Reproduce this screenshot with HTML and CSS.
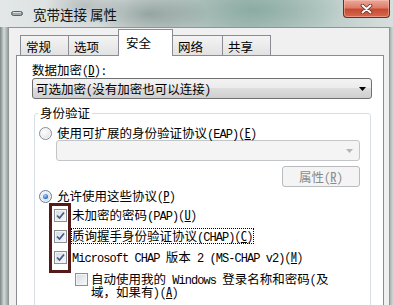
FILE: index.html
```html
<!DOCTYPE html>
<html lang="zh-CN">
<head>
<meta charset="utf-8">
<title>宽带连接 属性</title>
<link rel="stylesheet" href="styles.css">
</head>
<body>
<div class="window">
  <div class="titlebar">
    <svg class="app-icon" width="12" height="7" viewBox="0 0 12 7">
      <rect x="0.5" y="1.5" width="11" height="4" rx="2" fill="#8b9699" stroke="#56626a"/>
      <line x1="2" y1="2.5" x2="10" y2="2.5" stroke="#d9e1e4" stroke-width="1"/>
      <circle cx="3" cy="4" r="0.6" fill="#e8eef0"/>
      <circle cx="5" cy="4" r="0.6" fill="#e8eef0"/>
      <circle cx="7" cy="4" r="0.6" fill="#e8eef0"/>
      <circle cx="9" cy="4" r="0.6" fill="#e8eef0"/>
    </svg>
    <span class="title">宽带连接 属性</span>
    <div class="close-btn">
      <svg width="13" height="10" viewBox="0 0 13 10">
        <path d="M2.5 1.5 L10.5 8.5 M10.5 1.5 L2.5 8.5" stroke="#6a2a20" stroke-width="3.6" stroke-linecap="round"/>
        <path d="M2.5 1.5 L10.5 8.5 M10.5 1.5 L2.5 8.5" stroke="#ffffff" stroke-width="2" stroke-linecap="round"/>
      </svg>
    </div>
  </div>
  <div class="frame">
    <div class="client">
      <div class="tabs">
        <div class="tab t1">常规</div>
        <div class="tab t2">选项</div>
        <div class="tab t3 active">安全</div>
        <div class="tab t4">网络</div>
        <div class="tab t5">共享</div>
      </div>
      <div class="panel">
        <div class="field-label">数据加密(<u>D</u>):</div>
        <div class="combo">
          <span class="combo-text">可选加密(没有加密也可以连接)</span>
          <svg class="combo-arrow" width="7" height="4" viewBox="0 0 7 4"><path d="M0 0 H7 L3.5 4 Z" fill="#000"/></svg>
        </div>
        <fieldset class="group">
          <legend>身份验证</legend>
          <div class="opt radio-row r1">
            <span class="radio"></span>
            <span class="opt-text">使用可扩展的身份验证协议<span class="latin">(EAP)</span>(<u>E</u>)</span>
          </div>
          <div class="eap-block">
            <div class="combo disabled">
              <svg class="combo-arrow" width="7" height="4" viewBox="0 0 7 4"><path d="M0 0 H7 L3.5 4 Z" fill="#b4b4b4"/></svg>
            </div>
            <div class="btn-row"><button class="btn" disabled>属性(<u>R</u>)</button></div>
          </div>
          <div class="opt radio-row r2">
            <span class="radio checked"></span>
            <span class="opt-text">允许使用这些协议(<u>P</u>)</span>
          </div>
          <div class="protocols">
            <div class="opt check-row">
              <span class="checkbox"><svg width="9" height="9" viewBox="0 0 9 9"><path d="M1 4.5 L3.5 7 L8 1.5" fill="none" stroke="#3f5687" stroke-width="1.7"/></svg></span>
              <span class="opt-text">未加密的密码<span class="latin">(PAP)</span>(<u>U</u>)</span>
            </div>
            <div class="opt check-row">
              <span class="checkbox"><svg width="9" height="9" viewBox="0 0 9 9"><path d="M1 4.5 L3.5 7 L8 1.5" fill="none" stroke="#3f5687" stroke-width="1.7"/></svg></span>
              <span class="opt-text focused">质询握手身份验证协议<span class="latin">(CHAP)</span>(<u>C</u>)</span>
            </div>
            <div class="opt check-row">
              <span class="checkbox"><svg width="9" height="9" viewBox="0 0 9 9"><path d="M1 4.5 L3.5 7 L8 1.5" fill="none" stroke="#3f5687" stroke-width="1.7"/></svg></span>
              <span class="opt-text"><span class="latin">Microsoft CHAP </span>版本<span class="latin"> 2 (MS-CHAP v2)</span>(<u>M</u>)</span>
            </div>
            <div class="highlight"></div>
          </div>
          <div class="opt check-row sub">
            <span class="checkbox"></span>
            <span class="opt-text wrap">自动使用我的<span class="latin"> Windows </span>登录名称和密码(及域，如果有)(<u>A</u>)</span>
          </div>
        </fieldset>
      </div>
    </div>
  </div>
</div>
</body>
</html>
```

FILE: styles.css
```css
* { box-sizing: border-box; }
html, body { margin: 0; padding: 0; }
body {
  width: 393px;
  height: 305px;
  overflow: hidden;
  font-family: "Noto Sans Mono CJK SC", "Noto Sans CJK SC", sans-serif;
  font-size: 12.5px;
  color: #000;
}
u { text-decoration: underline; text-underline-offset: 1px; }
.latin {
  font-family: "Liberation Mono", "DejaVu Sans Mono", monospace;
  font-size: 12px;
  letter-spacing: -0.95px;
  line-height: 8px;
}

.window {
  height: 305px;
  display: flex;
  flex-direction: column;
  background: #c3ccca;
}

.titlebar {
  height: 27px;
  flex: none;
  display: flex;
  align-items: center;
  padding-left: 11px;
  background:
    radial-gradient(ellipse 60px 22px at 150px 14px, rgba(105,125,120,0.5), transparent),
    radial-gradient(ellipse 90px 26px at 255px 10px, rgba(110,155,142,0.5), transparent),
    radial-gradient(ellipse 40px 20px at 85px 6px, rgba(120,130,130,0.35), transparent),
    linear-gradient(to right, #e3e7e7 0, #d9dfde 90px, #bcc8c5 170px, #a9bdb7 250px, #b9cbc6 320px, #d7dfdd 393px);
}
.app-icon { flex: none; }
.title {
  margin-left: 10px;
  font-family: "Noto Sans CJK SC", sans-serif;
  font-size: 13.5px;
  line-height: 16px;
  color: #111;
}
.close-btn {
  margin-left: auto;
  margin-right: 3px;
  align-self: flex-start;
  width: 47px;
  height: 18px;
  border: 1px solid #6b2e22;
  border-top: 0;
  border-radius: 0 0 4px 4px;
  background: linear-gradient(#eba99a, #dd7d6b 45%, #c84a30 55%, #d56a50);
  box-shadow: inset 0 0 0 1px rgba(255, 205, 195, 0.45);
  display: flex;
  align-items: center;
  justify-content: center;
}

.frame {
  flex: 1;
  display: flex;
  padding: 0 3px 0 8px;
  min-height: 0;
  background:
    linear-gradient(to right, #7c8685 0, #a7afae 2px, #d4dad9 4px, #b6bebd 6px, #97a09f 8px) left top / 8px 100% no-repeat,
    linear-gradient(to right, #a9b2b1, #d2d8d7) right top / 3px 100% no-repeat,
    #c5cdcc;
}
.client {
  flex: 1;
  min-width: 0;
  display: flex;
  flex-direction: column;
  background: #f0f0f0;
  border: 1px solid #8c9696;
  border-bottom: 0;
  padding: 1px 5px 0 7px;
}

.tabs {
  flex: none;
  height: 26px;
  display: flex;
  align-items: flex-end;
  padding-left: 4px;
}
.tab {
  height: 20px;
  margin-left: -1px;
  border: 1px solid #898c95;
  border-bottom: 0;
  background: linear-gradient(#f4f4f4, #e2e2e2);
  padding: 4px 0 0 5px;
  line-height: 14px;
  font-family: "Noto Sans CJK SC", sans-serif;
  white-space: nowrap;
}
.tab:first-child { margin-left: 0; }
.t1 { width: 49px; }
.t2 { width: 51px; }
.t3 { width: 55px; }
.t4 { width: 51px; }
.t5 { width: 49px; }
.tab.active {
  height: 27px;
  margin-bottom: -1px;
  background: #fff;
  position: relative;
  z-index: 1;
  padding-top: 6px;
  padding-left: 7px;
}

.panel {
  flex: 1;
  min-height: 0;
  background: #fff;
  border: 1px solid #898c95;
  border-bottom: 0;
  padding: 6px 11px 0 15px;
}
.field-label { line-height: 16px; }

.combo {
  height: 21px;
  display: flex;
  align-items: center;
  border: 1px solid #707070;
  border-radius: 3px;
  background: linear-gradient(#f3f3f3 0, #ebebeb 50%, #dddddd 50%, #cfcfcf 100%);
  padding-left: 3px;
  line-height: 14px;
}
.combo-text { white-space: nowrap; }
.combo-arrow { margin-left: auto; margin-right: 5px; flex: none; }
.combo.disabled {
  border-color: #c3c6c8;
  background: #f4f4f4;
}
.combo.disabled .combo-arrow { margin-right: 6px; margin-top: 1px; }

.group {
  margin: 6px 1px 0 2px;
  padding: 0 0 12px 0;
  border: 1px solid #d5dfe5;
  border-radius: 3px;
  min-width: 0;
}
.group legend {
  margin-left: 3px;
  padding: 0 2px;
  line-height: 16px;
}

.opt {
  display: flex;
  align-items: center;
  line-height: 14px;
  white-space: nowrap;
}
.radio-row { padding-left: 4px; }
.radio-row .opt-text { margin-left: 5px; }
.r1 { margin-top: 5px; }
.r2 { margin-top: 2px; }

.radio {
  flex: none;
  width: 13px;
  height: 13px;
  border-radius: 50%;
  border: 1px solid #8a8e92;
  background: radial-gradient(circle at 40% 35%, #ffffff, #d9dbdd);
  box-shadow: inset 0 0 0 1px #f6f6f6;
  display: flex;
  align-items: center;
  justify-content: center;
}
.radio.checked {
  border-color: #6d7c92;
  background: radial-gradient(circle at 40% 35%, #f4f7fb, #c9d4e2);
}
.radio.checked::after {
  content: "";
  width: 5px;
  height: 5px;
  border-radius: 50%;
  background: radial-gradient(circle at 40% 35%, #a8d4ff, #1b5dbd 75%);
}

.eap-block { padding: 0 10px 0 21px; }
.btn-row { display: flex; justify-content: flex-end; margin-top: 5px; }
.btn {
  width: 78px;
  height: 21px;
  padding: 0;
  border: 1px solid #b8bcbf;
  border-radius: 3px;
  background: #f4f4f4;
  color: #8a8a8a;
  font: inherit;
  line-height: 14px;
}

.protocols { position: relative; margin-top: 5px; }
.check-row { padding-left: 19px; }
.check-row + .check-row { margin-top: 7px; }
.check-row .opt-text { margin-left: 5px; }
.checkbox {
  flex: none;
  width: 13px;
  height: 13px;
  border: 1px solid #8c8f93;
  background: linear-gradient(135deg, #d6dbe3, #f7f8fa);
  box-shadow: inset 0 0 0 1px #f3f4f6;
  display: flex;
  align-items: center;
  justify-content: center;
}
.focused { outline: 1px dotted #000; outline-offset: 0; }
.highlight {
  position: absolute;
  left: 14px;
  top: -5px;
  width: 22px;
  height: 70px;
  border: 3px solid #561a1a;
}

.sub {
  margin-top: 8px;
  padding-left: 40px;
  align-items: flex-start;
}
.sub .checkbox { margin-top: 1px; }
.sub .opt-text.wrap {
  margin-left: 3px;
  width: 245px;
  white-space: normal;
  line-height: 13px;
}
```
